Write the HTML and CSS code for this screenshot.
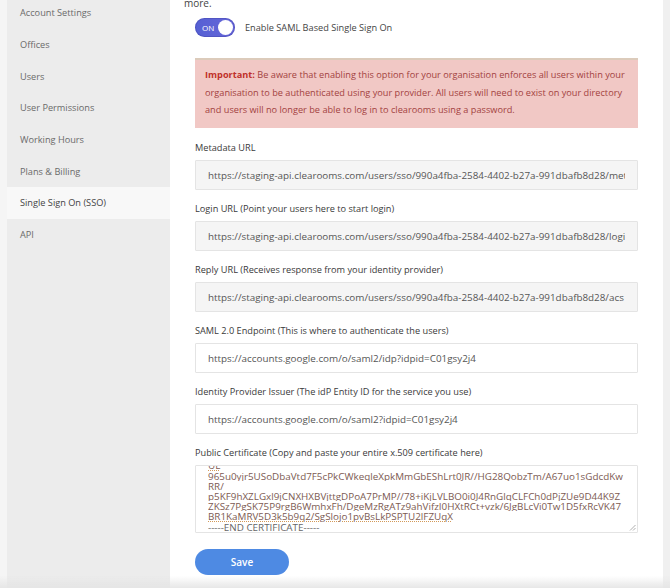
FILE: index.html
```html
<!DOCTYPE html>
<html lang="en">
<head>
<meta charset="utf-8">
<title>Single Sign On (SSO)</title>
<link rel="stylesheet" href="styles.css">
</head>
<body>
<div class="page">
  <div class="gutter"></div>
  <nav class="sidebar">
    <ul class="menu">
      <li class="menu-item">Account Settings</li>
      <li class="menu-item">Offices</li>
      <li class="menu-item">Users</li>
      <li class="menu-item">User Permissions</li>
      <li class="menu-item">Working Hours</li>
      <li class="menu-item">Plans &amp; Billing</li>
      <li class="menu-item active">Single Sign On (SSO)</li>
      <li class="menu-item">API</li>
    </ul>
  </nav>
  <main class="main">
    <p class="intro">more.</p>
    <div class="form">
      <div class="switch-row">
        <span class="switch"><span class="switch-text">ON</span><span class="knob"></span></span>
        <span class="switch-label">Enable SAML Based Single Sign On</span>
      </div>
      <div class="alert"><strong>Important:</strong> Be aware that enabling this option for your organisation enforces all users within your organisation to be authenticated using your provider. All users will need to exist on your directory and users will no longer be able to log in to clearooms using a password.</div>

      <div class="field">
        <label class="label">Metadata URL</label>
        <input class="input readonly" readonly value="https://staging-api.clearooms.com/users/sso/990a4fba-2584-4402-b27a-991dbafb8d28/metadata">
      </div>
      <div class="field">
        <label class="label">Login URL (Point your users here to start login)</label>
        <input class="input readonly" readonly value="https://staging-api.clearooms.com/users/sso/990a4fba-2584-4402-b27a-991dbafb8d28/login">
      </div>
      <div class="field">
        <label class="label">Reply URL (Receives response from your identity provider)</label>
        <input class="input readonly" readonly value="https://staging-api.clearooms.com/users/sso/990a4fba-2584-4402-b27a-991dbafb8d28/acs">
      </div>
      <div class="field">
        <label class="label">SAML 2.0 Endpoint (This is where to authenticate the users)</label>
        <input class="input" value="https://accounts.google.com/o/saml2/idp?idpid=C01gsy2j4">
      </div>
      <div class="field">
        <label class="label">Identity Provider Issuer (The idP Entity ID for the service you use)</label>
        <input class="input" value="https://accounts.google.com/o/saml2?idpid=C01gsy2j4">
      </div>
      <div class="field">
        <label class="label">Public Certificate (Copy and paste your entire x.509 certificate here)</label>
        <div class="textarea">
          <div class="cert">
            <span class="cert-line spell">UE</span>
            <span class="cert-line spell">965u0yjr5USoDbaVtd7F5cPkCWkeqleXpkMmGbEShLrt0JR//HG28QobzTm/A67uo1sGdcdKw</span>
            <span class="cert-line spell">RR/</span>
            <span class="cert-line spell">p5KF9hXZLGxl9jCNXHXBVjttgDPoA7PrMP//78+iKjLVLBO0i0J4RnGlqCLFCh0dPjZUe9D44K9Z</span>
            <span class="cert-line spell">ZKSz7PgSK75P9rgB6WmhxFh/DgeMzRgATz9ahVifzI0HXtRCt+vzk/6JgBLcVi0Tw1D5fxRcVK47</span>
            <span class="cert-line spell">BR1KaMRV5D3k5b9q2/SgSlojo1pvBsLkPSPTU2lFZUqX</span>
            <span class="cert-line">-----END CERTIFICATE-----</span>
          </div>
          <svg class="grip" width="7" height="7" viewBox="0 0 7 7"><path d="M6.5 1 L1 6.5 M6.5 4 L4 6.5" stroke="#9a9a9a" stroke-width="0.8" fill="none"/></svg>
        </div>
      </div>
      <button class="save" type="button">Save</button>
    </div>
  </main>
  <div class="rgutter"></div>
</div>
<div class="fade"></div>
</body>
</html>
```

FILE: styles.css
```css
* { box-sizing: border-box; }

html, body {
  margin: 0;
  padding: 0;
  height: 100%;
  overflow: hidden;
}

body {
  font-family: "Open Sans", "Liberation Sans", sans-serif;
  font-size: 9.2px;
  color: #444;
  background: #f1f1f1;
}

.page {
  display: flex;
  height: 588px;
}

.gutter {
  width: 7px;
  flex: none;
  background: #f5f5f5;
}

.sidebar {
  width: 163px;
  flex: none;
  background: #ececec;
}

.menu {
  list-style: none;
  margin: -2.85px 0 0;
  padding: 0;
}

.menu-item {
  height: 31.7px;
  line-height: 31.7px;
  padding-left: 13px;
  color: #6a6a6a;
}

.menu-item.active {
  background: #f8f8f8;
  color: #444;
}

.main {
  width: 493px;
  flex: none;
  background: #fff;
  padding: 0 25px 0 14px;
}

.rgutter {
  flex: 1;
  background: #f0f0f0;
}

.intro {
  margin: -4px 0 0;
  font-size: 10px;
  line-height: 14px;
  color: #444;
}

.form {
  margin-left: 11px;
}

.switch-row {
  display: flex;
  align-items: center;
  gap: 10px;
  margin-top: 8px;
  height: 19px;
}

.switch {
  width: 40px;
  height: 19px;
  border-radius: 10px;
  background: linear-gradient(90deg, #5560d4, #6666d8);
  display: flex;
  align-items: center;
  justify-content: space-between;
  padding: 0 2px 0 7px;
  box-shadow: inset 0 0 0 1px rgba(60, 60, 160, 0.35);
}

.switch-text {
  color: #fff;
  font-size: 8px;
  line-height: 1;
}

.knob {
  width: 15px;
  height: 15px;
  border-radius: 50%;
  background: #fff;
}

.switch-label {
  color: #444;
}

.alert {
  margin-top: 21px;
  background: #f1c8c5;
  border-top: 2px solid #dccbbb;
  padding: 6px 10px 9px;
  line-height: 17.5px;
  color: #a3423f;
}

.alert strong {
  color: #c0302a;
  font-weight: 700;
}

.field {
  margin-top: 13px;
  display: flex;
  flex-direction: column;
}

.field + .field {
  margin-top: 12.2px;
}

.label {
  line-height: 14px;
  margin-bottom: 5px;
  color: #3a3a3a;
}

.input {
  height: 30px;
  width: 100%;
  border: 1px solid #e4e4e4;
  border-radius: 1px;
  background: #fff;
  padding: 0 12px;
  font-family: "Open Sans", "Liberation Sans", sans-serif;
  font-size: 9.85px;
  color: #555;
  outline: none;
}

.input.readonly {
  background: #f5f5f5;
}

.textarea {
  position: relative;
  height: 68px;
  border: 1px solid #e4e4e4;
  border-radius: 1px;
  background: #fff;
  overflow: hidden;
  padding: 0 8px 0 12px;
}

.cert {
  margin-top: -6px;
  display: flex;
  flex-direction: column;
  font-size: 9.85px;
  line-height: 10.2px;
  color: #7c5a52;
}

.cert-line {
  white-space: pre;
  overflow: hidden;
}

.cert-line.spell {
  text-decoration: underline dotted #d39a5a;
  text-underline-offset: 1px;
}

.cert-line:last-child {
  color: #666;
}

.grip {
  position: absolute;
  right: 1px;
  bottom: 1px;
}

.save {
  margin-top: 16px;
  width: 94px;
  height: 26px;
  border: none;
  border-radius: 13px;
  background: #4e8ae3;
  color: #fff;
  font-family: "Open Sans", "Liberation Sans", sans-serif;
  font-size: 10px;
  font-weight: 600;
  display: block;
}

.fade {
  position: fixed;
  left: 0;
  right: 0;
  bottom: 0;
  height: 12px;
  background: linear-gradient(to bottom, rgba(225, 225, 225, 0), rgba(228, 228, 228, 0.9));
  pointer-events: none;
}
```
